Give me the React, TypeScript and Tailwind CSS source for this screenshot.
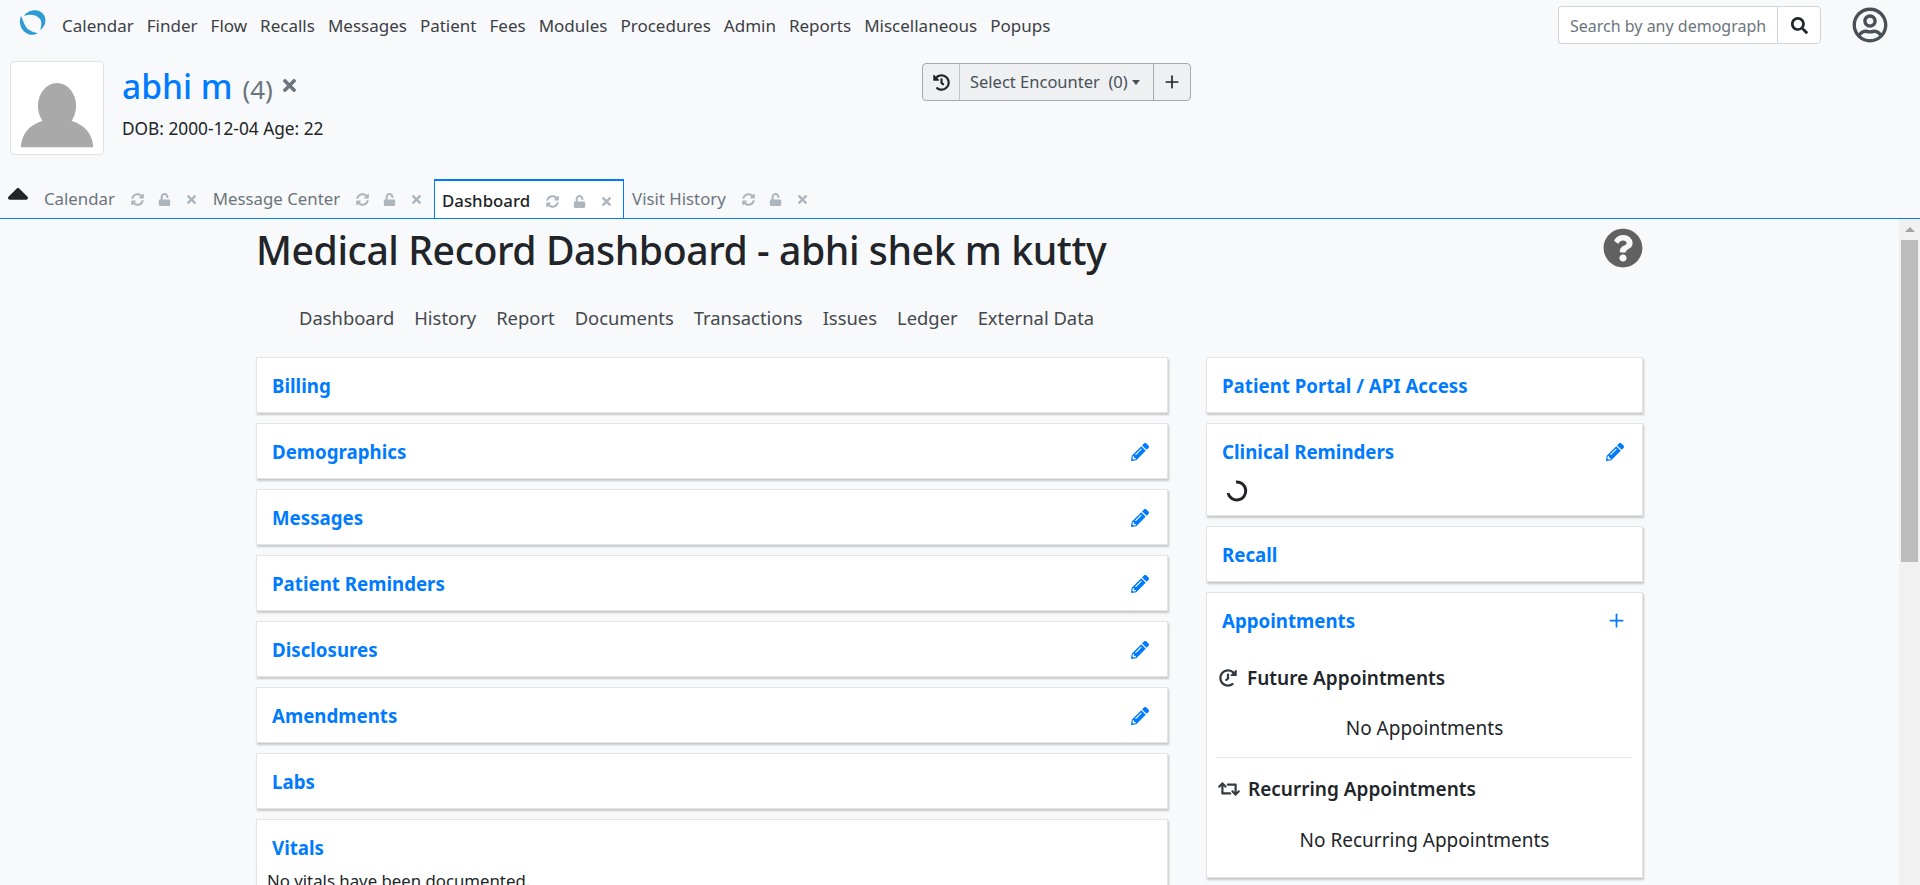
import { FaHistory, FaPencilAlt, FaQuestionCircle, FaRegUserCircle, FaRetweet, FaSearch, FaSortUp, FaSyncAlt, FaTimes, FaUnlock } from "react-icons/fa";
import { FiPlus } from "react-icons/fi";

const navItems = ["Calendar", "Finder", "Flow", "Recalls", "Messages", "Patient", "Fees", "Modules", "Procedures", "Admin", "Reports", "Miscellaneous", "Popups"];
const subNav = ["Dashboard", "History", "Report", "Documents", "Transactions", "Issues", "Ledger", "External Data"];

const tabs = [
  { name: "Calendar", active: false },
  { name: "Message Center", active: false },
  { name: "Dashboard", active: true },
  { name: "Visit History", active: false },
];

const leftCards = [
  { title: "Billing", edit: false },
  { title: "Demographics", edit: true },
  { title: "Messages", edit: true },
  { title: "Patient Reminders", edit: true },
  { title: "Disclosures", edit: true },
  { title: "Amendments", edit: true },
  { title: "Labs", edit: false },
];

const cardClass = "mb-[10px] bg-white border border-[#e3e4e6] shadow-[1px_2px_2px_rgba(0,0,0,0.2)]";

const Logo = () => (
  <svg viewBox="-1 -1 27 27" className="w-[27px] h-[27px] mt-[-6px]">
    <path d="M4 6 C8 -1 20 -2 24 5 C27 11 25 17 20 20 C22 15 22 10 19 8 C15 4 9 4 4 6Z" fill="#2f9bd6" />
    <path d="M1 6 C-2 12 1 21 8 24 C11 25.500 15 25 18 23 C14 22.500 9 21 6 17 C4 14 3 10 1 6Z" fill="#2f9bd6" />
  </svg>
);

const Card = ({ title, edit }: { title: string; edit: boolean }) => (
  <div className={`${cardClass} h-[56px] pl-[15px] pr-[18px] pt-[2px] flex items-center justify-between`}>
    <a className="text-[18.700px] font-bold text-[#007bff]">{title}</a>
    {edit && <FaPencilAlt className="text-[#007bff] text-[18px]" />}
  </div>
);

export default function App() {
  return (
    <div className="h-[885px] w-[1920px] overflow-hidden bg-[#f8f9fa] text-[#212529] flex flex-col font-['Noto_Sans',sans-serif]">
      <div className="h-[219px] shrink-0 flex flex-col">
        <div className="h-[50px] pt-[6px] pr-[32px] pl-[19px] flex items-start justify-between">
          <div className="flex items-center h-[38px]">
            <Logo />
            <nav className="ml-[16px] mt-[1px] flex gap-[13px] text-[17px] text-[#3c4045]">
              {navItems.map((item) => (
                <span key={item}>{item}</span>
              ))}
            </nav>
          </div>
          <div className="flex items-center">
            <div className="flex h-[38px] w-[263px]">
              <div className="w-[219px] border border-[#ced4da] border-r-0 rounded-l bg-white pl-[11px] pr-[10px] pt-[1px] flex items-center overflow-hidden whitespace-nowrap text-[#6c757d] text-[16px]">
                <span className="overflow-hidden">Search by any demographics</span>
              </div>
              <div className="w-[44px] border border-[#ced4da] rounded-r bg-white flex items-center justify-center text-[#212529]">
                <FaSearch className="text-[17px]" />
              </div>
            </div>
            <FaRegUserCircle className="ml-[31px] text-[36px] text-[#495057]" />
          </div>
        </div>

        <div className="flex-1 flex pl-[10px] pt-[11px]">
          <div className="w-[94px] h-[94px] bg-white border border-[#dee2e6] rounded overflow-hidden shrink-0 flex items-end justify-center">
            <svg viewBox="0 0 94 94" className="w-[92px] h-[92px]">
              <ellipse cx="47" cy="45" rx="19.500" ry="23.500" fill="#a9a9a9" />
              <path d="M10 87 C11 66 30 58 47 58 C64 58 83 66 84 87 Z" fill="#a9a9a9" />
            </svg>
          </div>
          <div className="ml-[18px] w-[800px]">
            <div className="flex items-baseline h-[46px]">
              <span className="text-[33.500px] font-medium text-[#007bff]">abhi m</span>
              <span className="ml-[10px] text-[26px] text-[#6c757d]">(4)</span>
              <FaTimes className="ml-[7px] mt-[2px] text-[#6c757d] text-[19px] self-center" />
            </div>
            <div className="mt-[9px] text-[17.300px]">DOB: 2000-12-04 Age: 22</div>
          </div>
          <div className="mt-[2px] flex h-[38px] border border-[#a6a8aa] rounded bg-[#eef0f1] text-[#495057] text-[16.500px]">
            <div className="w-[37px] border-r border-[#c3c5c7] flex items-center justify-center text-[#212529]">
              <FaHistory className="text-[17px]" />
            </div>
            <div className="w-[194px] border-r border-[#a6a8aa] pl-[10px] pt-[1px] flex items-center whitespace-nowrap">
              Select Encounter&nbsp; (0)
              <span className="ml-[4px] border-x-[4px] border-x-transparent border-t-[5px] border-t-[#495057]" />
            </div>
            <div className="w-[36px] flex items-center justify-center text-[#212529]">
              <FiPlus className="text-[20px]" />
            </div>
          </div>
        </div>

        <div className="h-[40px] shrink-0 flex items-end border-b border-[#007bff] relative">
          <FaSortUp className="absolute left-0 top-[5px] text-[36px] text-[#212529]" />
          <div className="ml-[36px] flex h-[40px]">
            {tabs.map((tab) => (
              <div
                key={tab.name}
                className={
                  tab.active
                    ? "h-[39px] w-[190px] ml-[4px] pl-[7px] pt-[3px] flex items-center border-x border-t-2 border-[#007bff] bg-white text-[#212529] mt-[1px] mb-[-1px] relative z-10"
                    : "h-[39px] pl-[8px] pr-[7px] pt-[3px] flex items-center text-[#6c757d]"
                }
              >
                <span className={tab.active ? "text-[16.800px] font-medium whitespace-nowrap" : "text-[16.800px] whitespace-nowrap"}>{tab.name}</span>
                <span className="ml-[16px] flex items-center gap-[14px] text-[#adb5bd] text-[13px]">
                  <FaSyncAlt />
                  <FaUnlock />
                  <FaTimes />
                </span>
              </div>
            ))}
          </div>
        </div>
      </div>

      <div className="flex-1 flex min-h-0">
        <div className="flex-1 min-w-0 overflow-hidden pl-[256px] pr-[256px]">
          <div className="flex items-center justify-between h-[60px] pt-[1px]">
            <h1 className="text-[39.200px] tracking-[-0.440px] font-medium whitespace-nowrap mt-[1px]">Medical Record Dashboard - abhi shek m kutty</h1>
            <FaQuestionCircle className="text-[40px] text-[#616161] mt-[-4px]" />
          </div>
          <nav className="mt-[25px] ml-[43px] flex gap-[20px] text-[18.400px] text-[#44484d]">
            {subNav.map((item) => (
              <span key={item}>{item}</span>
            ))}
          </nav>
          <div className="mt-[25px] flex gap-[38px]">
            <div className="w-[912px] shrink-0">
              {leftCards.map((c) => (
                <Card key={c.title} title={c.title} edit={c.edit} />
              ))}
              <div className={`${cardClass} h-[120px] pl-[15px]`}>
                <div className="pt-[14px] text-[18.700px] font-bold text-[#007bff]">Vitals</div>
                <div className="ml-[-5px] mt-[6px] text-[16.800px]">No vitals have been documented.</div>
              </div>
            </div>
            <div className="w-[437px] shrink-0">
              <Card title="Patient Portal / API Access" edit={false} />
              <div className={`${cardClass} h-[93px] pl-[15px] pr-[18px] pt-[1px]`}>
                <div className="h-[54px] flex items-center justify-between">
                  <a className="text-[18.700px] font-bold text-[#007bff]">Clinical Reminders</a>
                  <FaPencilAlt className="text-[#007bff] text-[18px]" />
                </div>
                <svg viewBox="0 0 24 24" className="w-[24px] h-[24px] ml-[3px]">
                  <path d="M11 3 A9 9 0 1 1 3 14" fill="none" stroke="#212529" strokeWidth="3" />
                </svg>
              </div>
              <Card title="Recall" edit={false} />
              <div className={`${cardClass} h-[286px] px-[10px] pt-[1px]`}>
                <div className="h-[54px] pl-[5px] pr-[5px] flex items-center justify-between">
                  <a className="text-[18.700px] font-bold text-[#007bff]">Appointments</a>
                  <FiPlus className="text-[#007bff] text-[21px]" />
                </div>
                <div className="mt-[16px] flex items-center gap-[10px] text-[19px] font-semibold">
                  <FaHistory className="-scale-x-100 text-[18px] text-[#343a40] ml-[2px]" />
                  <span>Future Appointments</span>
                </div>
                <div className="mt-[22px] pb-[14px] border-b border-[#e3e4e6] text-center text-[19px]">No Appointments</div>
                <div className="mt-[17px] flex items-center gap-[8px] text-[19px] font-semibold">
                  <FaRetweet className="text-[22px] text-[#343a40] ml-[1px]" />
                  <span>Recurring Appointments</span>
                </div>
                <div className="mt-[23px] text-center text-[19px]">No Recurring Appointments</div>
              </div>
            </div>
          </div>
        </div>
        <div className="w-[21px] bg-[#f1f1f1] shrink-0 flex flex-col items-center">
          <div className="h-[21px] flex items-center">
            <span className="border-x-[5px] border-x-transparent border-b-[5px] border-b-[#a3a3a3]" />
          </div>
          <div className="w-[17px] h-[322px] bg-[#bdbdbd]" />
        </div>
      </div>
    </div>
  );
}
